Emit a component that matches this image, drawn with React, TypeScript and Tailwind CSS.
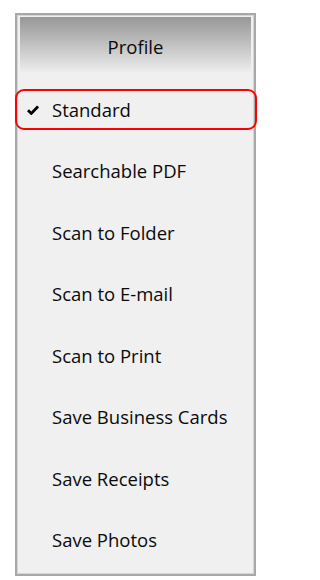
import React from "react";

const items = [
  "Standard",
  "Searchable PDF",
  "Scan to Folder",
  "Scan to E-mail",
  "Scan to Print",
  "Save Business Cards",
  "Save Receipts",
  "Save Photos",
];

export default function App() {
  return (
    <div
      className="w-[264px] h-[580px] bg-white pt-[13px] pl-[15px]"
      style={{ fontFamily: '"Open Sans", "Noto Sans", sans-serif' }}
    >
      <div className="w-[241px] h-[563px] border-2 border-[#a8a8a8] bg-[#f0f0f0]">
        <div className="h-full border border-[#d6d6d6] pt-[1px] px-[2px]">
          <div className="h-[55px] pt-[4px] bg-gradient-to-b from-[#979797] to-[#ededed] flex items-center justify-center text-[18.5px] text-[#0a0a0a]">
            Profile
          </div>
          <div className="mt-[6.5px]">
            {items.map((label, i) => (
              <div key={label} className="relative h-[61.5px] pt-[1px] flex items-center">
                {i === 0 && (
                  <div className="absolute left-[-5px] right-[-6px] top-[10px] h-[41px] border-2 border-[#ff0000] rounded-[9px]" />
                )}
                <div className="w-[32px] pl-[7px] flex items-center">
                  {i === 0 && (
                    <svg width="12" height="10" viewBox="0 0 12 10">
                      <path d="M1 5.2 L4.3 8.4 L11 1.4" fill="none" stroke="#000" strokeWidth="2.8" strokeLinejoin="miter" />
                    </svg>
                  )}
                </div>
                <span className="text-[18.5px] text-[#0a0a0a] leading-none">{label}</span>
              </div>
            ))}
          </div>
        </div>
      </div>
    </div>
  );
}
